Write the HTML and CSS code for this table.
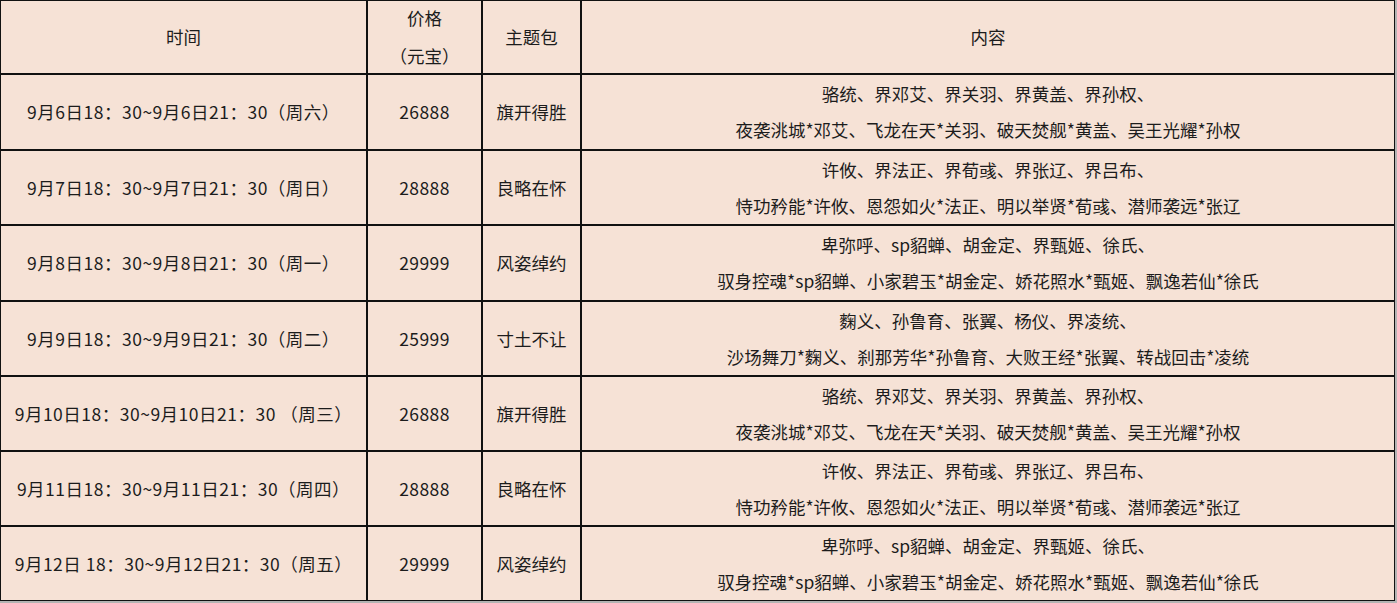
FILE: index.html
```html
<!DOCTYPE html>
<html lang="zh-CN">
<head>
<meta charset="utf-8">
<title>主题包</title>
<link rel="stylesheet" href="styles.css">
</head>
<body>
<div class="sheet">
  <div class="cell head">时间</div>
  <div class="cell head"><span>价格</span><span>（元宝）</span></div>
  <div class="cell head">主题包</div>
  <div class="cell head">内容</div>

  <div class="cell date">9月6日18：30~9月6日21：30（周六）</div>
  <div class="cell num">26888</div>
  <div class="cell">旗开得胜</div>
  <div class="cell content"><span>骆统、界邓艾、界关羽、界黄盖、界孙权、</span><span>夜袭洮城*邓艾、飞龙在天*关羽、破天焚舰*黄盖、吴王光耀*孙权</span></div>

  <div class="cell date">9月7日18：30~9月7日21：30（周日）</div>
  <div class="cell num">28888</div>
  <div class="cell">良略在怀</div>
  <div class="cell content"><span>许攸、界法正、界荀彧、界张辽、界吕布、</span><span>恃功矜能*许攸、恩怨如火*法正、明以举贤*荀彧、潜师袭远*张辽</span></div>

  <div class="cell date">9月8日18：30~9月8日21：30（周一）</div>
  <div class="cell num">29999</div>
  <div class="cell">风姿绰约</div>
  <div class="cell content"><span>卑弥呼、sp貂蝉、胡金定、界甄姬、徐氏、</span><span>驭身控魂*sp貂蝉、小家碧玉*胡金定、娇花照水*甄姬、飘逸若仙*徐氏</span></div>

  <div class="cell date">9月9日18：30~9月9日21：30（周二）</div>
  <div class="cell num">25999</div>
  <div class="cell">寸土不让</div>
  <div class="cell content"><span>麴义、孙鲁育、张翼、杨仪、界凌统、</span><span>沙场舞刀*麴义、刹那芳华*孙鲁育、大败王经*张翼、转战回击*凌统</span></div>

  <div class="cell date">9月10日18：30~9月10日21：30 （周三）</div>
  <div class="cell num">26888</div>
  <div class="cell">旗开得胜</div>
  <div class="cell content"><span>骆统、界邓艾、界关羽、界黄盖、界孙权、</span><span>夜袭洮城*邓艾、飞龙在天*关羽、破天焚舰*黄盖、吴王光耀*孙权</span></div>

  <div class="cell date">9月11日18：30~9月11日21：30（周四）</div>
  <div class="cell num">28888</div>
  <div class="cell">良略在怀</div>
  <div class="cell content"><span>许攸、界法正、界荀彧、界张辽、界吕布、</span><span>恃功矜能*许攸、恩怨如火*法正、明以举贤*荀彧、潜师袭远*张辽</span></div>

  <div class="cell date">9月12日 18：30~9月12日21：30（周五）</div>
  <div class="cell num">29999</div>
  <div class="cell">风姿绰约</div>
  <div class="cell content"><span>卑弥呼、sp貂蝉、胡金定、界甄姬、徐氏、</span><span>驭身控魂*sp貂蝉、小家碧玉*胡金定、娇花照水*甄姬、飘逸若仙*徐氏</span></div>
</div>
</body>
</html>
```

FILE: styles.css
```css
html, body {
  margin: 0;
  padding: 0;
}
body {
  background: #b4b4b4;
  width: 1397px;
  height: 603px;
  overflow: hidden;
  font-family: "Noto Sans CJK SC", "Noto Sans", sans-serif;
  font-size: 17.5px;
  color: #1c1c1c;
}
.sheet {
  display: grid;
  grid-template-columns: 365px 113px 97px 812px;
  grid-template-rows: 72px 74px 73px 74px 73px 73px 73px 73px;
  gap: 2px;
  padding: 1px;
  width: max-content;
  background: #111;
}
.cell {
  background: #f6e2d6;
  display: flex;
  flex-direction: column;
  align-items: center;
  justify-content: center;
  text-align: center;
  white-space: pre;
  line-height: 36px;
}
.head {
  line-height: 38px;
}
.date {
  letter-spacing: 0.5px;
}
.num {
  letter-spacing: 0.4px;
}
```
